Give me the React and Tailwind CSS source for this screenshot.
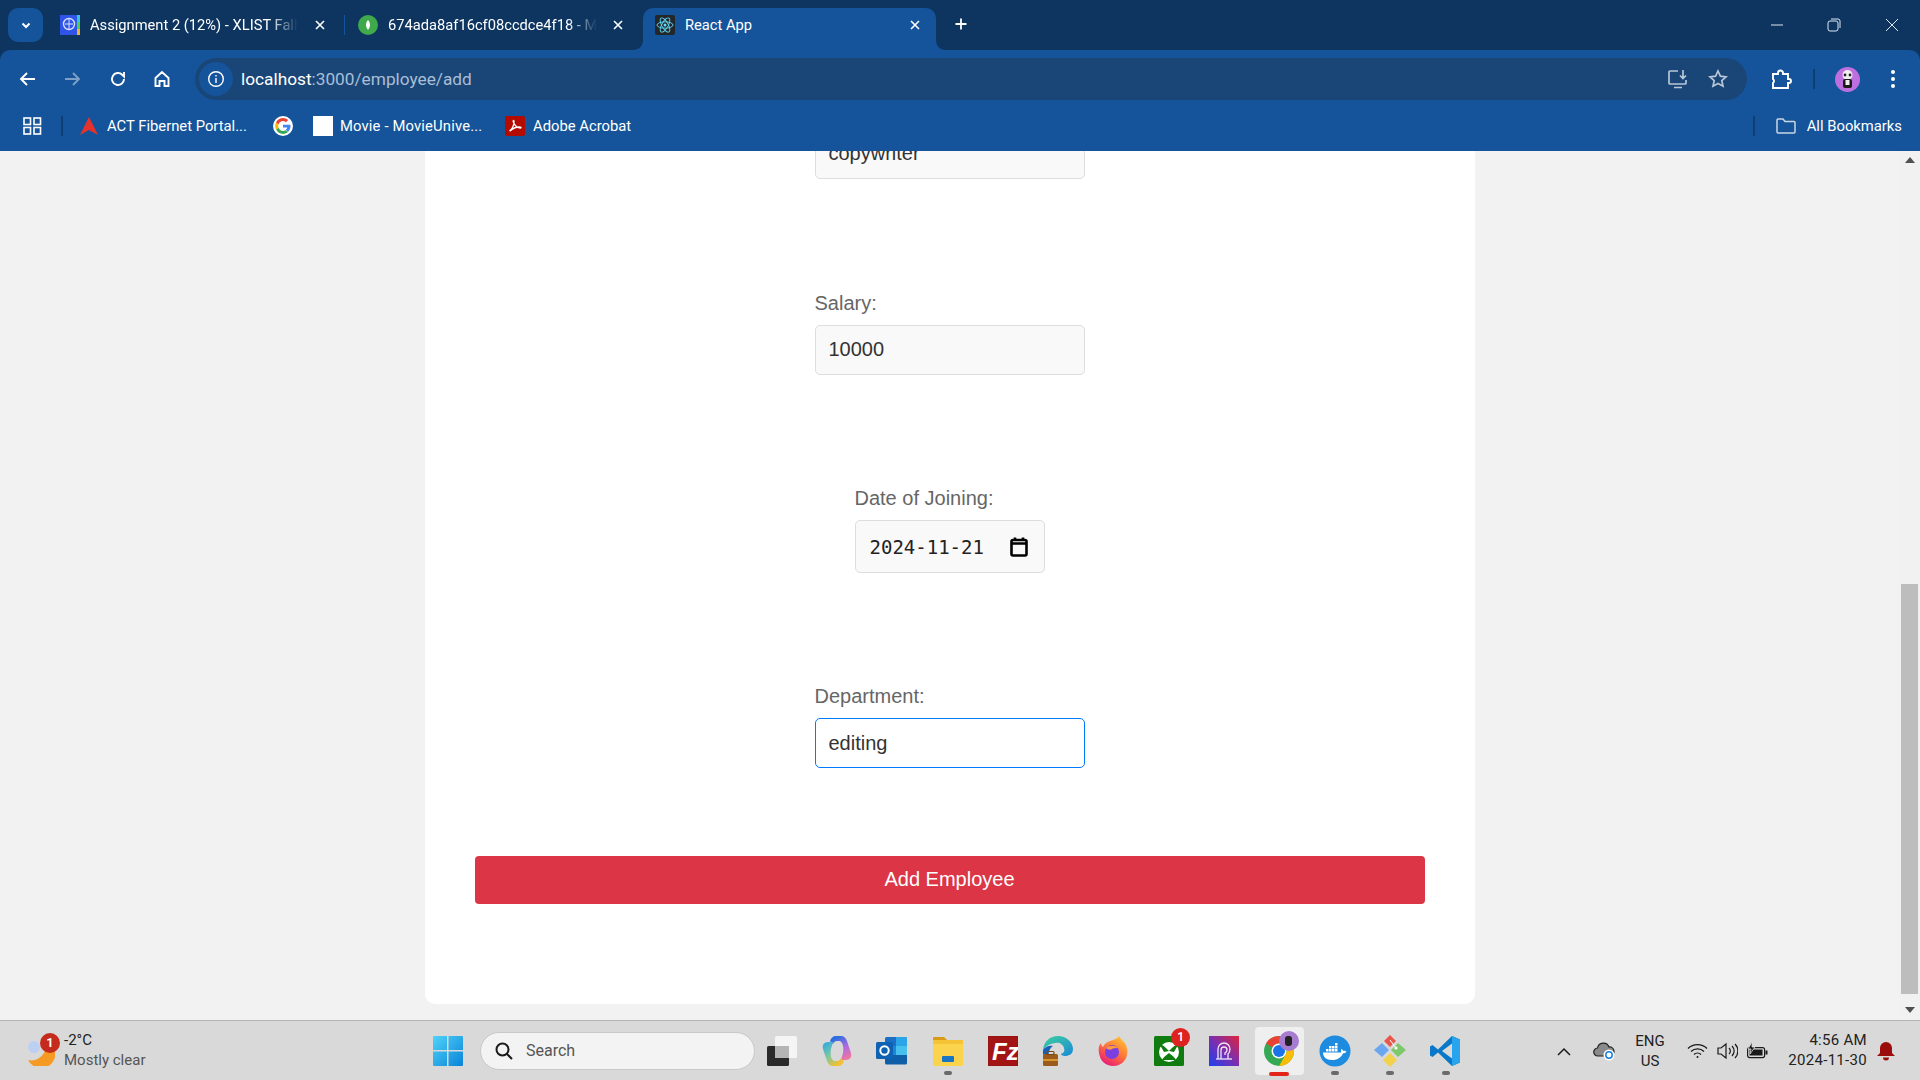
import { Fragment } from 'react';

const UI = "font-['Roboto',sans-serif]";

function Field({ label, value, focused }) {
  return (
    <div className="mb-[112px] flex w-[270px] flex-col">
      <label className="mb-[10px] h-[23px] text-[20px] leading-[23px] text-[#666]">{label}</label>
      <input
        readOnly
        value={value}
        className={`h-[50px] w-full rounded-[5px] border pb-[2px] pl-[13px] pr-3 text-[20px] text-[#333] outline-none ${
          focused ? 'border-[#007bff] bg-white' : 'border-[#ddd] bg-[#f9f9f9]'
        }`}
      />
    </div>
  );
}

function TabClose() {
  return (
    <svg width="12" height="12" viewBox="0 0 12 12" className="shrink-0">
      <path d="M2 2l8 8M10 2l-8 8" stroke="#fff" strokeWidth="1.6" />
    </svg>
  );
}

function Tab({ icon, title, active, fade }) {
  return (
    <div
      className={`relative flex h-[42px] shrink-0 items-center pb-2 pl-3 ${
        active ? 'w-[293px] rounded-t-[10px] bg-[#15549a] pr-[15px]' : 'w-[296px] pr-[18px]'
      }`}
    >
      {active && (
        <>
          <svg width="10" height="10" viewBox="0 0 10 10" className="absolute bottom-0 left-[-10px]">
            <path d="M10 0v10H0c6 0 10-4 10-10z" fill="#15549a" />
          </svg>
          <svg width="10" height="10" viewBox="0 0 10 10" className="absolute bottom-0 right-[-10px]">
            <path d="M0 0v10h10C4 10 0 6 0 0z" fill="#15549a" />
          </svg>
        </>
      )}
      <span className="flex h-5 w-5 shrink-0 items-center justify-center">{icon}</span>
      <span
        className={`ml-[10px] whitespace-nowrap text-[14.7px] text-white ${
          fade ? '[mask-image:linear-gradient(to_right,black_86%,transparent)]' : ''
        }`}
      >
        {title}
      </span>
      <span className="ml-auto flex">
        <TabClose />
      </span>
    </div>
  );
}

function CollegeFavicon() {
  return (
    <svg width="20" height="20" viewBox="0 0 20 20">
      <rect width="20" height="20" fill="#2f55e8" />
      <rect x="17" width="3" height="7" fill="#34c6e0" />
      <rect x="17" y="7" width="3" height="7" fill="#4cd04c" />
      <rect x="17" y="14" width="3" height="6" fill="#f0b030" />
      <circle cx="9" cy="9" r="5.5" fill="none" stroke="#d7e0ff" strokeWidth="1.4" />
      <path d="M5 9h8M9 4v10" stroke="#d7e0ff" strokeWidth="1" />
    </svg>
  );
}

function MongoFavicon() {
  return (
    <svg width="20" height="20" viewBox="0 0 20 20">
      <circle cx="10" cy="10" r="10" fill="#3fa94b" />
      <path d="M10 5c1.500 1.500 2 3.300 2 5s-.8 3.500-2 5c-1.200-1.500-2-3.300-2-5s.5-3.500 2-5z" fill="#fff" />
    </svg>
  );
}

function ReactFavicon() {
  return (
    <svg width="20" height="20" viewBox="0 0 20 20">
      <rect width="20" height="20" rx="2" fill="#23272a" />
      <g fill="none" stroke="#61dafb" strokeWidth="0.9">
        <ellipse cx="10" cy="10" rx="8" ry="3.200" />
        <ellipse cx="10" cy="10" rx="8" ry="3.200" transform="rotate(60 10 10)" />
        <ellipse cx="10" cy="10" rx="8" ry="3.200" transform="rotate(120 10 10)" />
      </g>
      <circle cx="10" cy="10" r="1.500" fill="#61dafb" />
    </svg>
  );
}

function NavIcon({ d, color = '#fff', width = 1.9 }) {
  return (
    <svg width="20" height="20" viewBox="0 0 20 20" fill="none" stroke={color} strokeWidth={width}>
      <path d={d} />
    </svg>
  );
}

function GoogleG() {
  return (
    <svg width="20" height="20" viewBox="0 0 48 48">
      <circle cx="24" cy="24" r="24" fill="#fff" />
      <path fill="#4285f4" d="M42 24.500c0-1.300-.1-2.300-.3-3.500H24v6.700h10.200c-.4 2.300-1.700 4.200-3.700 5.500l5.800 4.500C40 34.300 42 29.800 42 24.500z" />
      <path fill="#34a853" d="M24 43c5 0 9.200-1.600 12.300-4.400l-5.800-4.500c-1.600 1.100-3.800 1.800-6.500 1.800-5 0-9.200-3.300-10.700-7.900l-6 4.600C10.400 38.800 16.700 43 24 43z" />
      <path fill="#fbbc05" d="M13.300 28c-.4-1.200-.6-2.600-.6-4s.2-2.800.6-4l-6-4.600C6 18 5 20.900 5 24s1 6 2.300 8.600z" />
      <path fill="#ea4335" d="M24 12.100c2.700 0 5.200 1 7.100 2.800l5.300-5.200C33.200 6.800 29 5 24 5 16.700 5 10.400 9.200 7.300 15.400l6 4.600c1.500-4.600 5.700-7.900 10.700-7.900z" />
    </svg>
  );
}

function WindowsLogo() {
  return (
    <svg width="30" height="30" viewBox="0 0 30 30">
      <defs>
        <linearGradient id="winA" x1="0" y1="0" x2="1" y2="1">
          <stop offset="0" stopColor="#4fd3f9" />
          <stop offset="1" stopColor="#0a83d8" />
        </linearGradient>
      </defs>
      <path d="M1 0h13v14H0V1a1 1 0 0 1 1-1zM15.500 0H29a1 1 0 0 1 1 1v13H15.500zM0 15.500h14V30H1a1 1 0 0 1-1-1zM15.500 15.500H30V29a1 1 0 0 1-1 1H15.500z" fill="url(#winA)" />
    </svg>
  );
}

function TaskView() {
  return (
    <svg width="32" height="32" viewBox="0 0 32 32">
      <rect x="9" y="1" width="22" height="22" rx="1.500" fill="#f5f5f5" />
      <rect x="1" y="11" width="22" height="20" rx="1.500" fill="#2a2a2a" />
      <rect x="9" y="11" width="14" height="12" fill="#b5b5b5" />
    </svg>
  );
}

function Copilot() {
  return (
    <svg width="32" height="32" viewBox="0 0 32 32">
      <defs>
        <linearGradient id="copA" x1="0" y1="0" x2="0.6" y2="1">
          <stop offset="0" stopColor="#2aa6e8" />
          <stop offset="0.55" stopColor="#7cc8a0" />
          <stop offset="1" stopColor="#f5c030" />
        </linearGradient>
        <linearGradient id="copB" x1="0.3" y1="0" x2="0.8" y2="1">
          <stop offset="0" stopColor="#1f6fe0" />
          <stop offset="0.55" stopColor="#b46ae0" />
          <stop offset="1" stopColor="#f07a9a" />
        </linearGradient>
      </defs>
      <path d="M9 6c1-3 3-5 6-5h5c3 0 5 2 6 5l4 12c1 4-1 7-5 7h-5l2-7c1-5 0-12-4-12h-2c-2 0-3 1-4 3z" fill="url(#copB)" />
      <path d="M23 26c-1 3-3 5-6 5h-5c-3 0-5-2-6-5L2 14c-1-4 1-7 5-7h5l-2 7c-1 5 0 12 4 12h2c2 0 3-1 4-3z" fill="url(#copA)" />
    </svg>
  );
}

function Outlook() {
  return (
    <svg width="32" height="32" viewBox="0 0 32 32">
      <rect x="9" y="2" width="22" height="26" rx="1.500" fill="#1c6fc4" />
      <rect x="20" y="2" width="11" height="9" fill="#2ca4e8" />
      <rect x="9" y="11" width="11" height="9" fill="#1a87d8" />
      <rect x="20" y="11" width="11" height="9" fill="#47c0ee" />
      <path d="M9 20h22v8a1.500 1.500 0 0 1-1.500 1.500h-19A1.500 1.500 0 0 1 9 28z" fill="#0f5ea8" />
      <rect x="0" y="7" width="17" height="17" rx="1.500" fill="#0e62b4" />
      <circle cx="8.500" cy="15.500" r="4.200" fill="none" stroke="#fff" strokeWidth="2" />
    </svg>
  );
}

function Explorer() {
  return (
    <svg width="32" height="32" viewBox="0 0 32 32">
      <path d="M1 3a1 1 0 0 1 1-1h10l3 3h-14z" fill="#d99a14" />
      <rect x="1" y="5" width="30" height="26" rx="1.500" fill="#fcd34d" />
      <rect x="1" y="5" width="30" height="4" fill="#f7c336" />
      <rect x="10" y="21" width="12" height="6" rx="1" fill="#1a74c4" />
    </svg>
  );
}

function FileZilla() {
  return (
    <svg width="30" height="30" viewBox="0 0 30 30">
      <rect width="30" height="30" fill="#a31515" stroke="#7a1010" strokeDasharray="1.500 1.500" />
      <text x="4" y="24" fontFamily="'Liberation Sans',sans-serif" fontStyle="italic" fontWeight="700" fontSize="24" fill="#fff">Fz</text>
    </svg>
  );
}

function EdgeIcon() {
  return (
    <svg width="32" height="32" viewBox="0 0 32 32">
      <defs>
        <linearGradient id="edgeA" x1="0" y1="0" x2="1" y2="1">
          <stop offset="0" stopColor="#3ed09c" />
          <stop offset="1" stopColor="#1a8ad8" />
        </linearGradient>
      </defs>
      <path d="M1 15C2 6 8 1 16 1c8 0 15 6 15 13 0 5-4 7-8 7-2 0-4-1-4-2 3-1 4-3 3-6-1-4-5-6-9-5-6 1-10 4-12 7z" fill="url(#edgeA)" />
      <path d="M1 15c2-3 6-5 10-4-3 2-5 6-4 10 0 4 3 8 8 9-8 1-15-6-14-15z" fill="#1560b8" />
      <rect x="1" y="19" width="15" height="12" rx="1.500" fill="#9a5b1c" />
      <rect x="1" y="24" width="15" height="2" fill="#d8962c" />
      <rect x="5" y="16.500" width="7" height="3" rx="1" fill="none" stroke="#7a4712" strokeWidth="1.200" />
    </svg>
  );
}

function Firefox() {
  return (
    <svg width="32" height="32" viewBox="0 0 32 32">
      <defs>
        <linearGradient id="foxA" x1="0.8" y1="0" x2="0.2" y2="1">
          <stop offset="0" stopColor="#ffc531" />
          <stop offset="0.5" stopColor="#ff7139" />
          <stop offset="1" stopColor="#e5127f" />
        </linearGradient>
      </defs>
      <path d="M22 1c1 3 5 5 7 9 2 5 2 10-1 15-3 4-7 6-12 6-7 0-13-5-14-13-1-4 0-8 2-10 0 2 1 3 2 4 1-3 4-5 7-6 3-1 7-2 9-5z" fill="url(#foxA)" />
      <circle cx="15" cy="17" r="7" fill="#7a3fe0" />
      <path d="M9 13c3-3 9-3 12 0-2 0-5 0-6 1s-4 1-6-1z" fill="#ff9a3c" />
    </svg>
  );
}

function Xbox() {
  return (
    <svg width="30" height="30" viewBox="0 0 30 30">
      <rect width="30" height="30" rx="1.500" fill="#107c10" />
      <circle cx="15" cy="16" r="10" fill="#fff" />
      <path d="M15 15c-4-4-7-7-9-6l4 7 5-1zM15 15c4-4 7-7 9-6l-4 7-5-1z" fill="#107c10" />
      <path d="M15 17c-3 2-6 5-7 7h14c-1-2-4-5-7-7z" fill="#107c10" />
    </svg>
  );
}

function ProtonLike() {
  return (
    <svg width="30" height="30" viewBox="0 0 30 30">
      <defs>
        <linearGradient id="protA" x1="0" y1="1" x2="1" y2="0">
          <stop offset="0" stopColor="#1c3ff0" />
          <stop offset="0.5" stopColor="#7a2fb0" />
          <stop offset="1" stopColor="#e0243c" />
        </linearGradient>
      </defs>
      <rect width="30" height="30" fill="url(#protA)" />
      <path d="M9 23V13a6 6 0 0 1 12 0c0 3-1 4-2 5v5M12 23v-9a3 3 0 0 1 6 0c0 2-1 2-2 3v2" fill="none" stroke="#f2e6f5" strokeWidth="1.300" />
      <path d="M7 23h16" stroke="#f2e6f5" strokeWidth="1.300" />
    </svg>
  );
}

function Chrome() {
  return (
    <svg width="32" height="32" viewBox="0 0 32 32">
      <circle cx="16" cy="16" r="15" fill="#34a853" />
      <path d="M16 1a15 15 0 0 1 13 7.500H16a7.500 7.500 0 0 0-6.500 3.750L3 8.500A15 15 0 0 1 16 1z" fill="#ea4335" />
      <path d="M29 8.500A15 15 0 0 1 16 31l6.500-11.250A7.500 7.500 0 0 0 22.500 12z" fill="#fbbc05" />
      <circle cx="16" cy="16" r="7.500" fill="#fff" />
      <circle cx="16" cy="16" r="6" fill="#1a73e8" />
    </svg>
  );
}

function Docker() {
  return (
    <svg width="32" height="32" viewBox="0 0 32 32">
      <circle cx="16" cy="16" r="15.500" fill="#1d8be0" />
      <g fill="#fff">
        <rect x="7" y="14" width="2.500" height="2.500" />
        <rect x="10" y="14" width="2.500" height="2.500" />
        <rect x="13" y="14" width="2.500" height="2.500" />
        <rect x="16" y="14" width="2.500" height="2.500" />
        <rect x="10" y="11" width="2.500" height="2.500" />
        <rect x="13" y="11" width="2.500" height="2.500" />
        <rect x="16" y="11" width="2.500" height="2.500" />
        <rect x="16" y="8" width="2.500" height="2.500" />
        <path d="M4 17.500h18c.5-1.500 0-3 0-3.500 1 .3 2 1 2.400 2 1.200-.4 2.400-.2 3.100.4-.7 1.300-2 1.900-3.500 1.800C22.500 22 19 25 13 25c-6 0-9-3-9-7.500z" />
      </g>
    </svg>
  );
}

function GitClient() {
  return (
    <svg width="32" height="32" viewBox="0 0 32 32">
      <path d="M16 0l6 6-6 6-6-6z" fill="#e8584a" />
      <path d="M8 8l7 7-7 7-8-7z" fill="#6aa7f0" />
      <path d="M24 8l8 7-8 7-7-7z" fill="#7cc86a" />
      <path d="M16 18l7 7-7 7-7-7z" fill="#f2d24a" />
      <circle cx="22" cy="13" r="1.600" fill="#fff" />
      <path d="M16 5l6 8" stroke="#fff" strokeWidth="1" />
    </svg>
  );
}

function VsCode() {
  return (
    <svg width="30" height="30" viewBox="0 0 30 30">
      <path d="M22 0l8 3.500v23L22 30 8 16.500 2.500 21 0 19.500v-9L2.500 9 8 13.500z" fill="#0a78c8" />
      <path d="M22 0l8 3.500v23L22 30z" fill="#28a4ee" />
      <path d="M22 7.500v15L12 15z" fill="#d9d9d9" />
    </svg>
  );
}

const taskApps = [
  { id: 'view', icon: <TaskView /> },
  { id: 'copilot', icon: <Copilot /> },
  { id: 'outlook', icon: <Outlook /> },
  { id: 'explorer', icon: <Explorer />, dot: true },
  { id: 'filezilla', icon: <FileZilla /> },
  { id: 'edge', icon: <EdgeIcon /> },
  { id: 'firefox', icon: <Firefox /> },
  { id: 'xbox', icon: <Xbox />, badge: '1' },
  { id: 'proton', icon: <ProtonLike /> },
  { id: 'chrome', icon: <Chrome />, active: true },
  { id: 'docker', icon: <Docker />, dot: true },
  { id: 'git', icon: <GitClient />, dot: true },
  { id: 'vscode', icon: <VsCode />, dot: true },
];

function Browser() {
  return (
    <Fragment>
      {/* tab strip */}
      <div className={`flex h-[50px] shrink-0 items-end bg-[#0d3560] pl-2 ${UI}`}>
        <div className="mb-2 flex h-[34px] w-[35px] shrink-0 items-center justify-center rounded-[10px] bg-[#15549a]">
          <svg width="12" height="12" viewBox="0 0 12 12" fill="none" stroke="#fff" strokeWidth="2">
            <path d="M2.500 4.500L6 8l3.500-3.500" />
          </svg>
        </div>
        <div className="ml-[5px] flex items-end">
          <Tab icon={<CollegeFavicon />} title="Assignment 2 (12%) - XLIST Fall" fade />
          <div className="mb-[15px] mr-[1px] h-5 w-[1px] bg-[#15549a]" />
          <Tab icon={<MongoFavicon />} title="674ada8af16cf08ccdce4f18 - M" fade />
          <div className="w-[1px]" />
          <Tab icon={<ReactFavicon />} title="React App" active />
        </div>
        <div className="mb-[18px] ml-[17px] flex">
          <svg width="16" height="16" viewBox="0 0 16 16" stroke="#fff" strokeWidth="1.800">
            <path d="M8 2.500v11M2.500 8h11" />
          </svg>
        </div>
        <div className="mb-[18px] ml-auto flex items-center pr-[21px]">
          <svg width="14" height="14" viewBox="0 0 14 14" stroke="#dfe7f0" strokeWidth="1" fill="none" className="mr-[43px]">
            <path d="M1 7h12" />
          </svg>
          <svg width="14" height="14" viewBox="0 0 14 14" stroke="#dfe7f0" strokeWidth="1" fill="none" className="mr-[44px]">
            <rect x="1" y="3" width="10" height="10" rx="2" />
            <path d="M4 1h7a2 2 0 0 1 2 2v7" />
          </svg>
          <svg width="14" height="14" viewBox="0 0 14 14" stroke="#dfe7f0" strokeWidth="1" fill="none">
            <path d="M1 1l12 12M13 1L1 13" />
          </svg>
        </div>
      </div>

      {/* toolbar */}
      <div className="bg-[#0d3560]">
        <div className={`flex h-[51px] items-center rounded-t-[10px] bg-[#15549a] pl-[18px] pr-[18px] pt-[7px] ${UI}`}>
          <div className="flex w-[177px] shrink-0 items-center">
            <span className="flex w-[44px]">
              <NavIcon d="M17 10H3.500M9 4l-6 6 6 6" />
            </span>
            <span className="flex w-[46px]">
              <NavIcon d="M3 10h13.500M11 4l6 6-6 6" color="#7e9fc6" />
            </span>
            <span className="flex w-[44px]">
              <NavIcon d="M16 10a6 6 0 1 1-1.800-4.300L16 7.500V3" />
            </span>
            <span className="flex">
              <NavIcon d="M3.500 9L10 3l6.500 6v8h-4v-5h-5v5h-4z" />
            </span>
          </div>
          <div className="flex h-[42px] w-[1552px] shrink-0 items-center rounded-full bg-[#1a4677] pl-1">
            <span className="flex h-[34px] w-[34px] shrink-0 items-center justify-center rounded-full bg-[#15549a]">
              <svg width="18" height="18" viewBox="0 0 18 18" fill="none" stroke="#fff" strokeWidth="1.400">
                <circle cx="9" cy="9" r="7.300" />
                <path d="M9 8v5M9 5v1.500" />
              </svg>
            </span>
            <span className="ml-[8px] pt-[2px] text-[17.25px] text-white">
              localhost<span className="text-[#a9bed6]">:3000/employee/add</span>
            </span>
            <span className="ml-auto flex items-center pr-[19px]">
              <svg width="22" height="22" viewBox="0 0 22 22" fill="none" stroke="#b9c6d6" strokeWidth="1.700" className="mr-[19px]">
                <path d="M11 3H3a1 1 0 0 0-1 1v11a1 1 0 0 0 1 1h15a1 1 0 0 0 1-1v-3M7 19.500h8M16 2v8M13 7.500l3 3 3-3" />
              </svg>
              <svg width="20" height="20" viewBox="0 0 20 20" fill="none" stroke="#b9c6d6" strokeWidth="1.700">
                <path d="M10 2l2.400 5.200 5.600.6-4.200 3.800 1.200 5.600L10 14.400 5 17.200l1.200-5.600L2 7.800l5.600-.6z" />
              </svg>
            </span>
          </div>
          <span className="ml-[23px] flex">
            <svg width="22" height="22" viewBox="0 0 22 22" fill="none" stroke="#fff" strokeWidth="1.900">
              <path d="M3 6h5V5a2.500 2.500 0 0 1 5 0v1h5v5h1a2 2 0 0 1 0 4h-1v5H3v-5a2.500 2.500 0 0 0 0-4z" />
            </svg>
          </span>
          <span className="ml-[21px] h-[20px] w-[2px] bg-[#0d3e74]" />
          <span className="ml-[20px] flex h-[25px] w-[25px] items-center justify-center rounded-full bg-[#bd6fe0]">
            <svg width="17" height="20" viewBox="0 0 17 20">
              <circle cx="8.500" cy="6" r="5" fill="#eee" />
              <circle cx="6" cy="6" r="1.400" fill="#222" />
              <circle cx="11" cy="6" r="1.400" fill="#222" />
              <rect x="4" y="10" width="9" height="9" rx="2" fill="#1a1a1a" />
              <rect x="6.500" y="11" width="4" height="5" fill="#eee" />
            </svg>
          </span>
          <span className="ml-[31px] flex">
            <svg width="4" height="18" viewBox="0 0 4 18" fill="#fff">
              <circle cx="2" cy="2" r="2" />
              <circle cx="2" cy="9" r="2" />
              <circle cx="2" cy="16" r="2" />
            </svg>
          </span>
        </div>
      </div>

      {/* bookmarks bar */}
      <div className={`flex h-[50px] shrink-0 items-center bg-[#15549a] pl-[23px] pr-[18px] text-[14.8px] text-white ${UI}`}>
        <svg width="20" height="18" viewBox="0 0 20 18" fill="none" stroke="#fff" strokeWidth="1.600">
          <rect x="1" y="1" width="6.500" height="6.500" />
          <rect x="11" y="1" width="6.500" height="6.500" />
          <rect x="1" y="10.500" width="6.500" height="6.500" />
          <rect x="11" y="10.500" width="6.500" height="6.500" />
        </svg>
        <span className="ml-[18px] h-[20px] w-[2px] bg-[#0d3e74]" />
        <span className="ml-[16px] flex">
          <svg width="20" height="20" viewBox="0 0 20 20">
            <path d="M10 1L19 19l-9-5-9 5z" fill="#e5322d" />
          </svg>
        </span>
        <span className="ml-[8px] w-[139px] whitespace-nowrap">ACT Fibernet Portal...</span>
        <span className="ml-[27px] flex">
          <GoogleG />
        </span>
        <span className="ml-[20px] h-5 w-5 bg-white" />
        <span className="ml-[7px] w-[145px] whitespace-nowrap tracking-[0.15px]">Movie - MovieUnive...</span>
        <span className="ml-[20px] flex h-5 w-5 items-center justify-center rounded-[2px] bg-[#b30b00]">
          <svg width="14" height="14" viewBox="0 0 14 14" fill="none" stroke="#fff" strokeWidth="1.300">
            <path d="M1.500 12C4 10 6 6 6 2.500c0-2-1.500-1-.5 1C7 7 10 9 12.500 9c1 0 .5-1-1-1C8 8 4 10 2 12" />
          </svg>
        </span>
        <span className="ml-[8px] whitespace-nowrap">Adobe Acrobat</span>
        <span className="ml-auto h-[20px] w-[2px] bg-[#0d3e74]" />
        <span className="ml-[21px] flex">
          <svg width="20" height="18" viewBox="0 0 20 18" fill="none" stroke="#c9d6e5" strokeWidth="1.500">
            <path d="M1 3a1 1 0 0 1 1-1h5l2 2.500h9a1 1 0 0 1 1 1V15a1 1 0 0 1-1 1H2a1 1 0 0 1-1-1z" />
          </svg>
        </span>
        <span className="ml-[11px] whitespace-nowrap">All Bookmarks</span>
      </div>
    </Fragment>
  );
}

function Taskbar() {
  return (
    <div className={`flex h-[60px] shrink-0 items-center border-t border-t-[#b4b4b4] bg-[#d9d9d9] text-[#222] ${UI}`}>
      <div className="flex w-[433px] shrink-0 items-center pl-[25px]">
        <span className="relative flex h-[30px] w-[30px]">
          <svg width="30" height="30" viewBox="0 0 30 30">
            <path d="M29 11a14 14 0 0 1-26 13C9 26 20 22 21 10z" fill="#f59a23" />
            <circle cx="9" cy="11" r="6" fill="#bcd0f2" />
          </svg>
          <span className="absolute left-[15px] top-[-3px] flex h-[20px] w-[20px] items-center justify-center rounded-full bg-[#c42b1c] text-[13px] font-semibold text-white">
            1
          </span>
        </span>
        <div className="mb-[2px] ml-[9px] flex flex-col text-[15px] leading-[20px]">
          <span>-2°C</span>
          <span className="text-[#555]">Mostly clear</span>
        </div>
      </div>
      <span className="flex">
        <WindowsLogo />
      </span>
      <div className="ml-[17px] flex h-[38px] w-[275px] shrink-0 items-center rounded-full border border-[#c8c8c8] bg-[#f3f3f3] pl-[13px]">
        <svg width="20" height="20" viewBox="0 0 20 20" fill="none" stroke="#1a1a1a" strokeWidth="2">
          <circle cx="8.500" cy="8.500" r="6" />
          <path d="M13 13l5 5" />
        </svg>
        <span className="ml-[12px] text-[16px] text-[#555]">Search</span>
      </div>
      <div className="ml-[-10px] flex items-center pl-[9px]">
        {taskApps.map((app) => (
          <div key={app.id} className="relative flex h-[48px] w-[55.300px] shrink-0 items-center justify-center">
            {app.active && <span className="absolute inset-y-0 left-[3px] right-[3px] rounded-[4px] bg-[#efefef]" />}
            <span className="relative flex">{app.icon}</span>
            {app.badge && (
              <span className="absolute left-[30px] top-[1px] flex h-[19px] w-[19px] items-center justify-center rounded-full bg-[#dd2222] text-[12px] font-semibold text-white">
                {app.badge}
              </span>
            )}
            {app.active && (
              <>
                <span className="absolute left-[27px] top-[4px] flex h-[20px] w-[20px] items-center justify-center rounded-full bg-[#a77bd0]">
                  <span className="h-[10px] w-[7px] rounded-[3px] bg-[#222]" />
                </span>
                <span className="absolute bottom-[-1px] left-[17px] h-[4px] w-[20px] rounded-full bg-[#e3241b]" />
              </>
            )}
            {app.dot && <span className="absolute bottom-[0px] left-[24px] h-[4px] w-[8px] rounded-full bg-[#6a6a6a]" />}
          </div>
        ))}
      </div>
      <div className="ml-auto flex items-center pr-[25px]">
        <svg width="16" height="10" viewBox="0 0 16 10" fill="none" stroke="#1a1a1a" strokeWidth="1.500">
          <path d="M2 9l6-6 6 6" />
        </svg>
        <span className="ml-[21px] flex">
          <svg width="22" height="20" viewBox="0 0 22 20">
            <path d="M5 15a4 4 0 0 1-.5-8A6 6 0 0 1 16 6a4.500 4.500 0 0 1 1 9z" fill="#8a8a8a" stroke="#222" strokeWidth="1.200" />
            <circle cx="16" cy="14" r="5.500" fill="#fff" />
            <circle cx="16" cy="14" r="3.200" fill="none" stroke="#1a80d8" strokeWidth="1.500" />
          </svg>
        </span>
        <div className="ml-[20px] flex w-[30px] flex-col items-center text-[15px] leading-[20px]">
          <span>ENG</span>
          <span>US</span>
        </div>
        <span className="ml-[22px] flex">
          <svg width="21" height="16" viewBox="0 0 21 16" fill="none" stroke="#1a1a1a" strokeWidth="1.300">
            <path d="M1 5.500a13.500 13.500 0 0 1 19 0M4 8.500a9.500 9.500 0 0 1 13 0M7 11.500a5 5 0 0 1 7 0" />
            <circle cx="10.500" cy="14" r="1" fill="#1a1a1a" stroke="none" />
          </svg>
        </span>
        <span className="ml-[9px] flex">
          <svg width="21" height="18" viewBox="0 0 21 18" fill="none" stroke="#1a1a1a" strokeWidth="1.200">
            <path d="M1 6h3l5-4v14l-5-4H1zM12 6a4 4 0 0 1 0 6M15 4a7 7 0 0 1 0 10M18 2a10 10 0 0 1 0 14" />
          </svg>
        </span>
        <span className="ml-[8px] flex">
          <svg width="22" height="18" viewBox="0 0 22 18">
            <rect x="1.600" y="5.600" width="17" height="10" rx="2" fill="#d9d9d9" stroke="#1a1a1a" strokeWidth="1.200" />
            <rect x="3.500" y="7.500" width="13" height="6" fill="#1a1a1a" />
            <rect x="19.500" y="8.500" width="2" height="4" fill="#1a1a1a" />
            <path d="M6 0L2 7h3l-1 5 5-7H6z" fill="#1a1a1a" stroke="#d9d9d9" strokeWidth="0.800" />
          </svg>
        </span>
        <div className="ml-[14px] mb-[2px] flex w-[85px] flex-col items-end text-[15px] leading-[20px] tracking-[0.3px]">
          <span>4:56 AM</span>
          <span>2024-11-30</span>
        </div>
        <span className="ml-[10px] flex">
          <svg width="18" height="20" viewBox="0 0 18 20" fill="#9b0d0d">
            <path d="M9 1a6 6 0 0 0-6 6v5l-3 3h18l-3-3V7a6 6 0 0 0-6-6z" />
            <path d="M6 16.500a3 3 0 0 0 6 0z" />
          </svg>
        </span>
      </div>
    </div>
  );
}

export default function App() {
  return (
    <div className="flex h-screen flex-col overflow-hidden font-['Liberation_Sans',Arial,sans-serif]">
      <Browser />
      <div className="flex min-h-0 flex-1">
        <div className="min-w-0 flex-1 overflow-hidden bg-[#f2f2f2]">
          <form className="mx-auto -mt-[22px] flex h-[875px] w-[1050px] flex-col items-center rounded-[10px] bg-white">
            <div className="mb-[113px] w-[270px]">
              <input
                readOnly
                value="copywriter"
                className="h-[50px] w-full rounded-[5px] border border-[#ddd] bg-[#f9f9f9] pb-[2px] pl-[13px] pr-3 text-[20px] text-[#333] outline-none"
              />
            </div>
            <Field label="Salary:" value="10000" />
            <div className="mb-[112px] flex w-[190px] flex-col">
              <label className="mb-[10px] h-[23px] text-[20px] leading-[23px] text-[#666]">Date of Joining:</label>
              <div className="flex h-[53px] items-center rounded-[5px] border border-[#ddd] bg-[#f9f9f9] pl-[14px] pr-[16px] text-[19px] text-[#222] font-['DejaVu_Sans_Mono',monospace]">
                <span className="pt-[1px]">2024-11-21</span>
                <svg width="18" height="20" viewBox="0 0 18 20" fill="none" stroke="#000" strokeWidth="2.600" className="ml-auto">
                  <rect x="1.500" y="3" width="15" height="15.500" rx="1.500" />
                  <path d="M1.500 6.500h15M5 0.500v3M13 0.500v3" />
                </svg>
              </div>
            </div>
            <div className="mb-[88px] flex w-[270px] flex-col">
              <label className="mb-[10px] h-[23px] text-[20px] leading-[23px] text-[#666]">Department:</label>
              <input
                readOnly
                value="editing"
                className="h-[50px] w-full rounded-[5px] border border-[#007bff] bg-white pl-[13px] pr-3 text-[20px] text-[#333] outline-none"
              />
            </div>
            <button type="button" className="h-[48px] w-[950px] rounded-[4px] bg-[#dc3545] pb-[2px] text-[20px] text-white">
              Add Employee
            </button>
          </form>
        </div>
        {/* scrollbar */}
        <div className="flex w-[21px] shrink-0 flex-col items-center bg-[#f1f1f1]">
          <span className="flex h-[17px] items-center">
            <svg width="10" height="6" viewBox="0 0 10 6" fill="#505050">
              <path d="M5 0l5 6H0z" />
            </svg>
          </span>
          <span className="mt-auto h-[410px] w-[17px] bg-[#bdbdbd]" />
          <span className="mb-[4px] mt-[9px] flex h-[13px] items-center">
            <svg width="10" height="6" viewBox="0 0 10 6" fill="#505050">
              <path d="M5 6L0 0h10z" />
            </svg>
          </span>
        </div>
      </div>
      <Taskbar />
    </div>
  );
}
